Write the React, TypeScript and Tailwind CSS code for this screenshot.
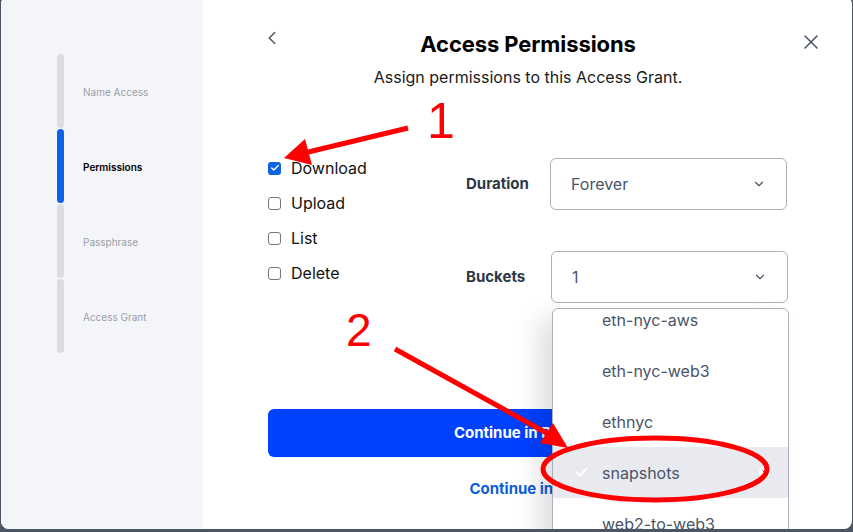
import { ChevronDown, ChevronLeft, X, Check } from "lucide-react"

const steps = [
  { label: "Name Access", active: false },
  { label: "Permissions", active: true },
  { label: "Passphrase", active: false },
  { label: "Access Grant", active: false },
]

const perms = [
  { label: "Download", checked: true },
  { label: "Upload", checked: false },
  { label: "List", checked: false },
  { label: "Delete", checked: false },
]

const buckets = ["eth-nyc-aws", "eth-nyc-web3", "ethnyc", "snapshots", "web2-to-web3"]

function Box({ checked }: { checked: boolean }) {
  return checked ? (
    <span className="flex h-[13px] w-[13px] items-center justify-center rounded-[3px] bg-[#0b63e5]">
      <Check size={10} strokeWidth={3.5} className="text-white" />
    </span>
  ) : (
    <span className="h-[13px] w-[13px] rounded-[3px] border border-[#767676] bg-white" />
  )
}

function Annotations() {
  return (
    <svg className="pointer-events-none absolute inset-0" width="853" height="532">
      <line x1="408" y1="128" x2="300" y2="154" stroke="#ff0000" strokeWidth="5" />
      <polygon points="284,158 305,139 312,165" fill="#ff0000" />
      <line x1="395" y1="349" x2="552" y2="436" stroke="#ff0000" strokeWidth="5" />
      <polygon points="568,448 540,443 553,423" fill="#ff0000" />
      <ellipse cx="655" cy="469" rx="112" ry="31" fill="none" stroke="#ff0000" strokeWidth="5" />
    </svg>
  )
}

export default function App() {
  return (
    <div className="relative h-[532px] w-[853px] overflow-hidden bg-[#4b5563] font-['Inter',sans-serif]">
      <div className="ml-px -mt-[4px] flex h-[533px] w-[851px] overflow-hidden rounded-lg bg-white">
        {/* steps */}
        <div className="w-[202px] shrink-0 bg-[#f4f5f9] pl-[56px] pt-[58px]">
          <div className="flex flex-col gap-px">
            {steps.map((s) => (
              <div key={s.label} className="flex h-[74px] items-center">
                <div className={`h-full w-[7px] rounded-full ${s.active ? "bg-[#0b63e5]" : "bg-[#dcdde2]"}`} />
                <span className={`ml-[19px] mt-[2px] text-[10px] ${s.active ? "font-semibold text-black" : "text-[#9a9ea8]"}`}>
                  {s.label}
                </span>
              </div>
            ))}
          </div>
        </div>

        {/* main */}
        <div className="relative flex-1 px-[65px] pt-[34px]">
          <ChevronLeft size={22} strokeWidth={1.6} className="absolute left-[58px] top-[31px] text-[#4a5568]" />
          <X size={24} strokeWidth={1.6} className="absolute right-[30px] top-[34px] text-[#4a5568]" />

          <h1 className="text-center text-[22px] font-bold leading-[28px] tracking-[-0.1px] text-black">Access Permissions</h1>
          <p className="mt-[9px] text-center text-[16px] leading-[20px] text-[#1a1a1a]">
            Assign permissions to this Access Grant.
          </p>

          <div className="mt-[71px] flex">
            <div className="flex w-[198px] flex-col gap-[15px]">
              {perms.map((p) => (
                <label key={p.label} className="flex h-[20px] items-center">
                  <Box checked={p.checked} />
                  <span className="ml-[10px] text-[16px] text-[#111]">{p.label}</span>
                </label>
              ))}
            </div>

            <div className="flex flex-col gap-[41px]">
              <div className="flex items-center">
                <span className="w-[84px] text-[15px] font-bold text-[#2d3748]">Duration</span>
                <div className="flex h-[52px] w-[237px] items-center justify-between rounded-[6px] border border-[#a9b1bd] pl-[20px] pr-[20px]">
                  <span className="text-[16px] text-[#4a5568]">Forever</span>
                  <ChevronDown size={14} strokeWidth={2} className="text-[#4a5568]" />
                </div>
              </div>
              <div className="flex items-center">
                <span className="w-[85px] text-[15px] font-bold text-[#2d3748]">Buckets</span>
                <div className="flex h-[52px] w-[237px] items-center justify-between rounded-[6px] border border-[#a9b1bd] pl-[20px] pr-[20px]">
                  <span className="text-[16px] text-[#4a5568]">1</span>
                  <ChevronDown size={14} strokeWidth={2} className="text-[#4a5568]" />
                </div>
              </div>
            </div>
          </div>

          <button className="mt-[106px] h-[48px] w-[520px] rounded-md bg-[#0040ff] text-[15px] font-bold text-white">
            Continue in Browser
          </button>
          <div className="mt-[21px] pr-[6px] text-center text-[15px] font-bold text-[#0b5fdb]">Continue in CLI</div>

          {/* bucket list */}
          <div className="absolute left-[349px] top-[312px] h-[240px] w-[237px] rounded-t-[6px] border border-[#a9b1bd] bg-white pt-[7px] shadow-[-14px_10px_24px_rgba(0,0,0,0.12)]">
            <div className="h-full overflow-hidden">
              <div className="-mt-[22px]">
                {buckets.map((b) => (
                  <div
                    key={b}
                    className={`relative flex h-[51px] items-center pl-[49px] text-[16px] text-[#4a5568] ${b === "snapshots" ? "bg-[#e9eaef]" : ""}`}
                  >
                    {b === "snapshots" && (
                      <Check size={15} strokeWidth={3} className="absolute left-[21px] text-white" />
                    )}
                    {b}
                    {b === "snapshots" && (
                      <span className="absolute right-[18px] flex h-[11px] w-[11px] items-center justify-center rounded-full bg-white">
                        <X size={7} strokeWidth={3} className="text-[#333]" />
                      </span>
                    )}
                  </div>
                ))}
              </div>
            </div>
          </div>
        </div>
      </div>

      <Annotations />
      <span className="pointer-events-none absolute left-[427px] top-[96px] font-['Liberation_Sans',sans-serif] text-[50px] leading-none text-[#ff0000]">1</span>
      <span className="pointer-events-none absolute left-[346px] top-[307px] font-['Liberation_Sans',sans-serif] text-[46px] leading-none text-[#ff0000]">2</span>
    </div>
  )
}
